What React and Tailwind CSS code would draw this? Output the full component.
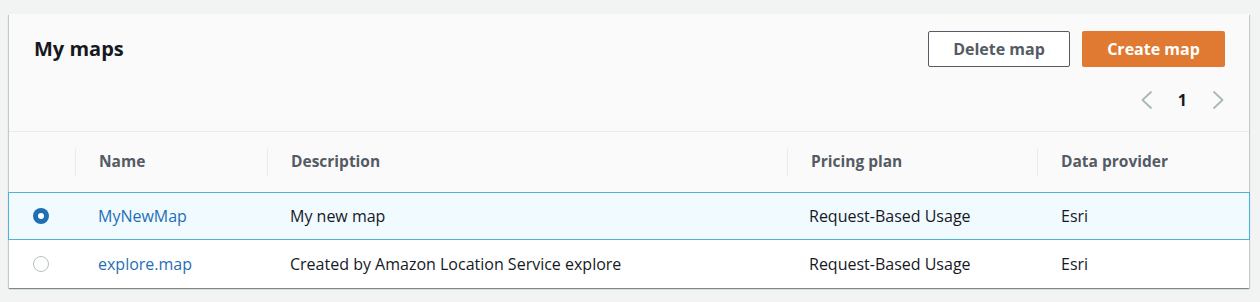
import React from "react";

const font = { fontFamily: '"Open Sans", "Noto Sans", Arial, sans-serif' };

function Radio({ checked }) {
  return checked ? (
    <span className="inline-flex w-4 h-4 rounded-full bg-[#1f6fb5] items-center justify-center">
      <span className="w-[6px] h-[6px] rounded-full bg-white" />
    </span>
  ) : (
    <span className="inline-block w-4 h-4 rounded-full border border-[#b8c1c2] bg-white" />
  );
}

function Chevron({ dir }) {
  return (
    <svg width="11" height="18" viewBox="0 0 11 18" fill="none">
      <path
        d={dir === "left" ? "M10 1 L1.5 9 L10 17" : "M1 1 L9.5 9 L1 17"}
        stroke="#aab7b8"
        strokeWidth="1.8"
        strokeLinecap="round"
        strokeLinejoin="round"
      />
    </svg>
  );
}

const cols = "grid grid-cols-[66px_192px_520px_250px_1fr]";

function HeaderCell({ children, sep = true }) {
  return (
    <div className="relative flex items-center h-full pl-6">
      {sep && <span className="absolute left-0 top-[16px] bottom-[16px] w-px bg-[#eaeded]" />}
      <span className="text-[15.5px] font-bold text-[#545b64]">{children}</span>
    </div>
  );
}

function Row({ selected, name, desc, plan, provider }) {
  return (
    <div
      className={
        cols +
        " h-[48px] items-center text-[16px] text-[#16191f] " +
        (selected ? "bg-[#f1faff] border border-[#4fb3d9] -mx-px" : "bg-white")
      }
    >
      <div className="flex items-center pl-[24px]">
        <Radio checked={selected} />
      </div>
      <div className="pl-[23px] text-[#1f6fb5]">{name}</div>
      <div className="pl-[23px]">{desc}</div>
      <div className="pl-[22px]">{plan}</div>
      <div className="pl-[24px]">{provider}</div>
    </div>
  );
}

export default function App() {
  return (
    <div className="w-[1260px] h-[302px] bg-[#f2f3f3] pt-[14px] pl-[9px] pr-[11px]" style={font}>
      <div className="bg-white shadow-[0_1px_1px_0_rgba(0,28,36,0.3),1px_1px_1px_0_rgba(0,28,36,0.15),-1px_1px_1px_0_rgba(0,28,36,0.15)]">
        <div className="bg-[#fafafa] h-[118px] border-b border-[#eaeded] flex justify-between pl-[25px] pr-[24px]">
          <div className="pt-[20px] text-[20px] font-bold text-[#16191f]">My maps</div>
          <div className="flex flex-col items-end pt-[17px]">
            <div className="flex gap-3">
              <button className="w-[142px] h-[36px] rounded-[2px] border border-[#545b64] bg-white text-[16px] font-bold text-[#545b64]">
                Delete map
              </button>
              <button className="w-[143px] h-[36px] rounded-[2px] bg-[#e07a32] text-[16px] font-bold text-white">
                Create map
              </button>
            </div>
            <div className="flex items-center gap-[26px] mt-[21px] mr-[1px]">
              <Chevron dir="left" />
              <span className="text-[16px] font-bold text-[#16191f]">1</span>
              <Chevron dir="right" />
            </div>
          </div>
        </div>
        <div className={cols + " h-[60px] bg-[#fafafa]"}>
          <div />
          <HeaderCell>Name</HeaderCell>
          <HeaderCell>Description</HeaderCell>
          <HeaderCell>Pricing plan</HeaderCell>
          <HeaderCell>Data provider</HeaderCell>
        </div>
        <Row selected name="MyNewMap" desc="My new map" plan="Request-Based Usage" provider="Esri" />
        <Row
          name="explore.map"
          desc="Created by Amazon Location Service explore"
          plan="Request-Based Usage"
          provider="Esri"
        />
      </div>
    </div>
  );
}
